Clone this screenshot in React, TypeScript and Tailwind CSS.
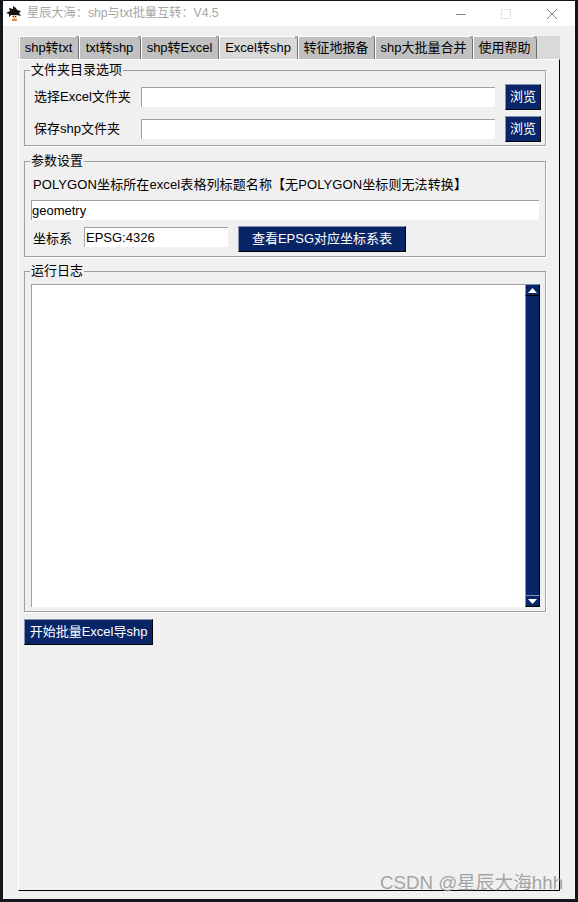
const tabs = [
  { label: 'shp转txt', width: 'w-[60px]' },
  { label: 'txt转shp', width: 'w-[62px]' },
  { label: 'shp转Excel', width: 'w-[78px]' },
  { label: 'Excel转shp', width: 'w-[79px]', active: true },
  { label: '转征地报备', width: 'w-[77px]' },
  { label: 'shp大批量合并', width: 'w-[98px]' },
  { label: '使用帮助', width: 'w-[64px]' },
]

const font = "font-['Liberation_Sans','Noto_Sans_CJK_SC',sans-serif]"

function NavyButton({ label, className }: { label: string; className: string }) {
  return (
    <button className={`flex items-center justify-center shrink-0 bg-[#082567] text-white text-[13px] border border-t-[#8592ad] border-l-[#8592ad] border-r-black border-b-black ${className}`}>
      {label}
    </button>
  )
}

function Entry({ value, className }: { value?: string; className: string }) {
  return (
    <div className={`flex items-center bg-white border-t border-l border-t-[#a0a0a0] border-l-[#a0a0a0] text-[13px] text-black ${className}`}>
      {value}
    </div>
  )
}

function Group({ title, className, children }: { title: string; className: string; children: React.ReactNode }) {
  return (
    <fieldset className={`border border-[#a0a0a0] shadow-[1px_1px_0_#fff] ${className}`}>
      <legend className="ml-[5px] px-[1px] text-[13px] leading-[16px] text-black">{title}</legend>
      {children}
    </fieldset>
  )
}

function GokuIcon() {
  return (
    <svg width="18" height="18" viewBox="0 0 18 18" className="shrink-0">
      <polygon points="8,1 11,3 12,5 16,6 14,8 16,11 12,10 6,10 4,12 4,9 1,8 5,6 4,3 8,4" fill="#111" />
      <polygon points="7,10 12,10 12,13 10,14 8,14 7,12" fill="#f5c6a0" />
      <rect x="8" y="11" width="1" height="1" fill="#222" />
      <rect x="10" y="11" width="1" height="1" fill="#222" />
      <rect x="7" y="14" width="5" height="2" fill="#e8813a" />
    </svg>
  )
}

function WindowButtons() {
  return (
    <div className="flex items-center ml-auto">
      <svg width="12" height="12" viewBox="0 0 12 12" className="mr-[33px]">
        <line x1="1" y1="6.5" x2="11" y2="6.5" stroke="#8a8a8a" />
      </svg>
      <svg width="12" height="12" viewBox="0 0 12 12" className="mr-[34px]">
        <rect x="1.5" y="1.5" width="9" height="9" fill="none" stroke="#e3e3e3" />
      </svg>
      <svg width="12" height="12" viewBox="0 0 12 12" className="mr-[17px]">
        <path d="M1 1l10 10M11 1L1 11" stroke="#8a8a8a" fill="none" />
      </svg>
    </div>
  )
}

function ScrollArrow({ up }: { up?: boolean }) {
  return (
    <div className="flex items-center justify-center h-[12px] shrink-0 bg-[#082567] border border-t-[#8592ad] border-l-[#8592ad] border-r-black border-b-black">
      <svg width="9" height="5" viewBox="0 0 9 5">
        <polygon points={up ? '4.5,0 9,5 0,5' : '0,0 9,0 4.5,5'} fill="#fff" />
      </svg>
    </div>
  )
}

export default function App() {
  return (
    <div className={`w-[578px] h-[902px] bg-[#14141c] pt-px pl-[3px] pr-[3px] pb-[3px] overflow-hidden relative ${font}`}>
      <div className="flex flex-col h-full bg-[#f0f0f0]">
        {/* Title bar */}
        <div className="flex items-center h-[25px] shrink-0 bg-white pl-[2px]">
          <GokuIcon />
          <span className="ml-[4px] text-[12.2px] text-[#a6a6a6]">星辰大海：shp与txt批量互转：V4.5</span>
          <WindowButtons />
        </div>

        {/* Notebook */}
        <div className="flex flex-col ml-[15px] mr-[15px] mt-[10px] h-[855px]">
          <div className="flex h-[23px] shrink-0 bg-[#d9d9d9] pl-px">
            {tabs.map((t) => (
              <div
                key={t.label}
                className={`relative flex items-center justify-center pr-px border-t border-t-white border-l border-l-white border-r border-r-[#6f6f6f] text-[13px] text-black shrink-0 ${t.width} ${t.active ? 'bg-[#d9d9d9]' : 'bg-[#c0c0c0]'}`}
              >
                {t.label}
                <span className="absolute -top-px right-[-1px] w-[3px] h-[3px] bg-[#a8a8a8]" />
              </div>
            ))}
          </div>

          {/* Pane */}
          <div className="flex flex-col flex-1 border-l border-l-white border-r border-r-black border-b border-b-black border-t border-t-white pl-[5px] pr-[13px]">
            <Group title="文件夹目录选项" className="h-[84px] mt-[2px]">
              <div className="flex items-center h-[32px] mt-[3px] pl-[9px] text-[13px] text-black">
                <span className="w-[107px]">选择Excel文件夹</span>
                <Entry className="w-[354px] h-[20px]" />
                <NavyButton label="浏览" className="w-[36px] h-[26px] ml-[10px]" />
              </div>
              <div className="flex items-center h-[32px] pl-[9px] text-[13px] text-black">
                <span className="w-[107px]">保存shp文件夹</span>
                <Entry className="w-[354px] h-[20px]" />
                <NavyButton label="浏览" className="w-[36px] h-[26px] ml-[10px]" />
              </div>
            </Group>

            <Group title="参数设置" className="h-[104px] mt-[7px] mr-[1px]">
              <div className="pl-[6px] pr-[6px] pt-[6px]">
                <div className="flex items-center h-[20px] pl-[2px] text-[13px] tracking-[0.1px] text-black">
                  POLYGON坐标所在excel表格列标题名称【无POLYGON坐标则无法转换】
                </div>
                <Entry value="geometry" className="w-[508px] h-[20px] mt-[5px]" />
                <div className="flex items-center h-[26px] mt-[6px] text-[13px] text-black">
                  <span className="w-[53px] pl-[2px]">坐标系</span>
                  <Entry value="EPSG:4326" className="w-[144px] h-[20px] mb-[4px] pl-[1px]" />
                  <NavyButton label="查看EPSG对应坐标系表" className="w-[168px] h-[26px] ml-[10px]" />
                </div>
              </div>
            </Group>

            <Group title="运行日志" className="h-[349px] mt-[6px]">
              <div className="flex h-[323px] mt-[5px] ml-[6px]">
                <div className="w-[494px] bg-white border-t border-l border-t-[#a0a0a0] border-l-[#a0a0a0]" />
                <div className="flex flex-col w-[15px] bg-[#082567]">
                  <ScrollArrow up />
                  <div className="flex-1 border-x border-l-[#8592ad] border-r-black" />
                  <ScrollArrow />
                </div>
              </div>
            </Group>

            <NavyButton label="开始批量Excel导shp" className="w-[129px] h-[26px] mt-[7px]" />
          </div>
        </div>
      </div>

      {/* CSDN watermark */}
      <span className="absolute left-[380px] top-[871px] text-[18.7px] leading-[24px] text-[#8f8f8f]/80">CSDN @星辰大海hhh</span>
    </div>
  )
}
